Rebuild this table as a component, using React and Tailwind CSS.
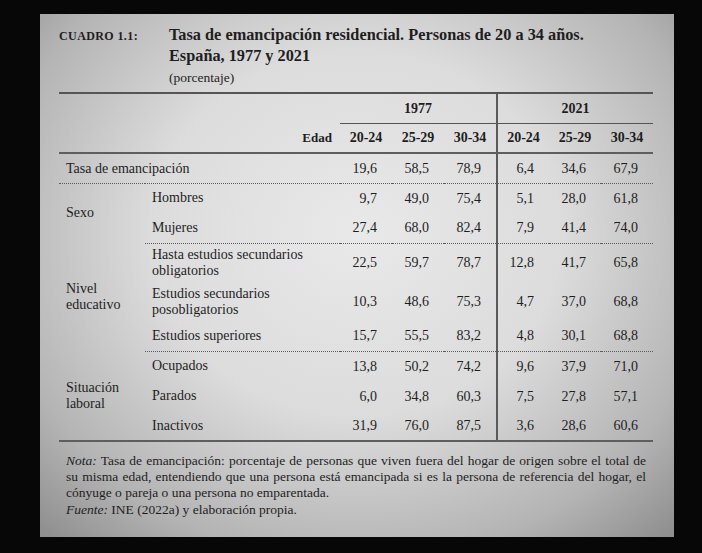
const SERIF = "font-['Liberation_Serif','Times_New_Roman',serif]"

const DOT = '[border-bottom:1px_dotted_#5c5c5c]'
const SOLID_BOTTOM = '[border-bottom:2px_solid_#5e5e5e]'
const VLINE = '[border-left:2px_solid_#5a5a5a]'

const GROUPS = [
  {
    name: null,
    rows: [
      { label: 'Tasa de emancipación', vals: ['19,6', '58,5', '78,9', '6,4', '34,6', '67,9'] },
    ],
  },
  {
    name: ['Sexo'],
    rows: [
      { label: 'Hombres', vals: ['9,7', '49,0', '75,4', '5,1', '28,0', '61,8'] },
      { label: 'Mujeres', vals: ['27,4', '68,0', '82,4', '7,9', '41,4', '74,0'] },
    ],
  },
  {
    name: ['Nivel', 'educativo'],
    rows: [
      { label: ['Hasta estudios secundarios', 'obligatorios'], vals: ['22,5', '59,7', '78,7', '12,8', '41,7', '65,8'] },
      { label: ['Estudios secundarios', 'posobligatorios'], vals: ['10,3', '48,6', '75,3', '4,7', '37,0', '68,8'] },
      { label: 'Estudios superiores', vals: ['15,7', '55,5', '83,2', '4,8', '30,1', '68,8'] },
    ],
  },
  {
    name: ['Situación', 'laboral'],
    rows: [
      { label: 'Ocupados', vals: ['13,8', '50,2', '74,2', '9,6', '37,9', '71,0'] },
      { label: 'Parados', vals: ['6,0', '34,8', '60,3', '7,5', '27,8', '57,1'] },
      { label: 'Inactivos', vals: ['31,9', '76,0', '87,5', '3,6', '28,6', '60,6'] },
    ],
  },
]

const AGES = ['20-24', '25-29', '30-34']

function Lines({ text }) {
  if (!Array.isArray(text)) return text
  return text.map((t, i) => (
    <span key={i} className="block">
      {t}
    </span>
  ))
}

function DataRow({ group, row, first, last, groupIndex }) {
  const lastGroup = groupIndex === GROUPS.length - 1
  const edge = last ? (lastGroup ? SOLID_BOTTOM : DOT) : ''
  const tall = Array.isArray(row.label)
  return (
    <tr className={tall ? 'h-[39px]' : 'h-[30px]'}>
      {group.name === null ? (
        <td colSpan={2} className={`pl-[7px] align-middle ${edge}`}>
          {row.label}
        </td>
      ) : (
        <>
          {first && (
            <td
              rowSpan={group.rows.length}
              className={`pl-[7px] align-middle leading-[16px] ${lastGroup ? SOLID_BOTTOM : ''}`}
            >
              <Lines text={group.name} />
            </td>
          )}
          <td className={`pl-[7px] align-middle leading-[16px] ${edge}`}>
            <Lines text={row.label} />
          </td>
        </>
      )}
      {row.vals.map((v, i) => (
        <td
          key={i}
          className={`pr-[15px] text-right align-middle ${edge} ${i === 3 ? VLINE : ''}`}
        >
          {v}
        </td>
      ))}
    </tr>
  )
}

export default function App() {
  return (
    <div className={`w-[702px] h-[553px] overflow-hidden bg-[#070707] pt-[14px] pl-[40px] ${SERIF}`}>
      <div className="w-[634px] h-[523px] pl-[19px] pr-[21px] pt-[10px] text-[#1e1e1e] bg-[radial-gradient(ellipse_72%_78%_at_50%_42%,#e9e9e9_0%,#dcdcdc_45%,#b4b4b4_80%,#909090_100%)]">
        {/* Title */}
        <div className="flex items-baseline">
          <div className="w-[110px] shrink-0 text-[12px] font-bold tracking-[0.4px]">CUADRO 1.1:</div>
          <div>
            <h1 className="text-[16.3px] font-bold leading-[21px]">
              Tasa de emancipación residencial. Personas de 20 a 34 años.
              <br />
              España, 1977 y 2021
            </h1>
            <p className="mt-[3px] text-[13.5px] leading-[18px]">(porcentaje)</p>
          </div>
        </div>

        {/* Table */}
        <table className="mt-[5px] w-[594px] table-fixed border-collapse text-[14px]">
          <colgroup>
            <col className="w-[86px]" />
            <col className="w-[195px]" />
            <col className="w-[52px]" />
            <col className="w-[52px]" />
            <col className="w-[53px]" />
            <col className="w-[52px]" />
            <col className="w-[52px]" />
            <col className="w-[52px]" />
          </colgroup>
          <thead>
            <tr className="h-[30px]">
              <th colSpan={2} className="border-t-2 border-t-[#555]" />
              <th colSpan={3} className="border-t-2 border-t-[#555] border-b border-b-[#555] text-center font-bold">
                1977
              </th>
              <th colSpan={3} className={`border-t-2 border-t-[#555] border-b border-b-[#555] text-center font-bold ${VLINE}`}>
                2021
              </th>
            </tr>
            <tr className="h-[30px]">
              <th colSpan={2} className={`pr-[8px] text-right text-[13px] font-bold ${SOLID_BOTTOM}`}>
                Edad
              </th>
              {[...AGES, ...AGES].map((a, i) => (
                <th key={i} className={`text-center font-bold ${SOLID_BOTTOM} ${i === 3 ? VLINE : ''}`}>
                  {a}
                </th>
              ))}
            </tr>
          </thead>
          <tbody>
            {GROUPS.map((g, gi) =>
              g.rows.map((r, ri) => (
                <DataRow
                  key={`${gi}-${ri}`}
                  group={g}
                  row={r}
                  first={ri === 0}
                  last={ri === g.rows.length - 1}
                  groupIndex={gi}
                />
              ))
            )}
          </tbody>
        </table>

        {/* Note */}
        <div className="mt-[11px] px-[7px] text-[13.5px] leading-[16px]">
          <div className="text-justify [text-align-last:justify]">
            <i>Nota:</i> Tasa de emancipación: porcentaje de personas que viven fuera del hogar de origen sobre el total de
          </div>
          <div className="text-justify [text-align-last:justify]">
            su misma edad, entendiendo que una persona está emancipada si es la persona de referencia del hogar, el
          </div>
          <div>cónyuge o pareja o una persona no emparentada.</div>
          <div className="mt-[1px]">
            <i>Fuente:</i> INE (2022a) y elaboración propia.
          </div>
        </div>
      </div>
    </div>
  )
}
